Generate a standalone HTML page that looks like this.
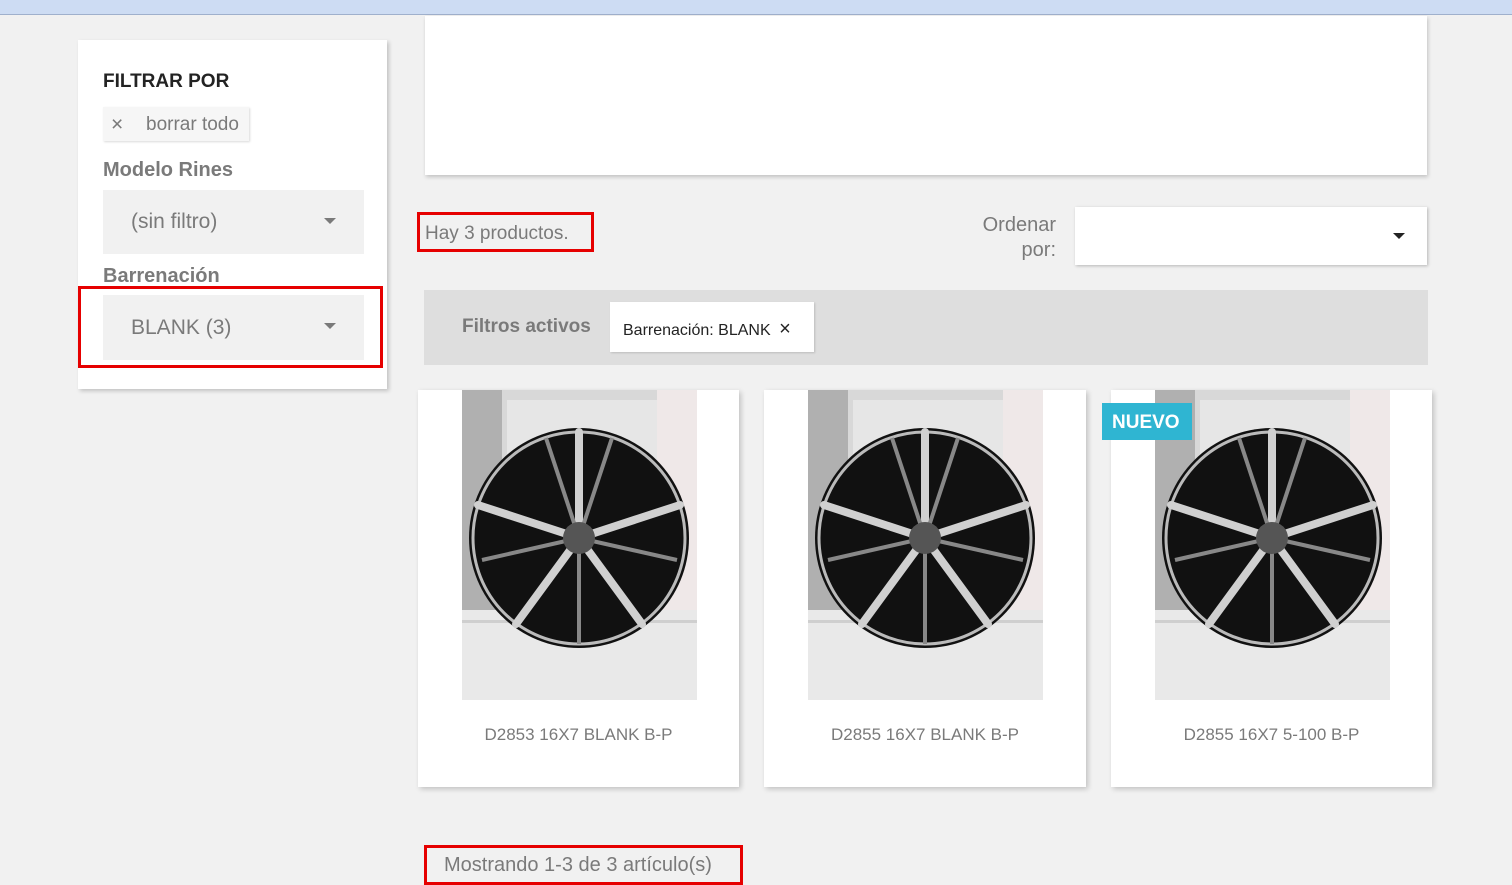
<!DOCTYPE html>
<html><head><meta charset="utf-8"><style>
*{box-sizing:border-box;margin:0;padding:0}
body{width:1512px;height:880px;overflow:hidden;background:#f1f1f1;font-family:"Liberation Sans",sans-serif;color:#7a7a7a;position:relative}
.a{position:absolute}
.sh{box-shadow:2px 2px 4px rgba(0,0,0,.2)}
.red{border:3px solid #e60000}
.dd{background:#f1f1f1;font-size:20px;color:#7a7a7a}
.tri{width:0;height:0;border-left:6px solid transparent;border-right:6px solid transparent;border-top:6px solid #7a7a7a}
.card{background:#fff;box-shadow:2px 2px 5px rgba(0,0,0,.2)}
.name{font-size:17px;color:#7a7a7a;text-align:center;width:100%}
</style></head><body>
<div class="a" style="left:0;top:0;width:1512px;height:15px;background:#cddcf3;border-bottom:1px solid #9fb0cc"></div>
<div class="a" style="left:425px;top:16px;width:1002px;height:159px;background:#fff;box-shadow:1px 2px 4px rgba(0,0,0,.2)"></div>

<div class="a sh" style="left:78px;top:40px;width:309px;height:349px;background:#fff"></div>
<div class="a" style="left:103px;top:71px;font-size:19px;font-weight:bold;color:#232323">FILTRAR POR</div>
<div class="a" style="left:103px;top:107px;width:146px;height:34px;background:#f6f6f6;box-shadow:1px 1px 2px rgba(0,0,0,.15)"></div>
<div class="a" style="left:111px;top:113px;font-size:21px;color:#7a7a7a">×</div>
<div class="a" style="left:146px;top:114px;font-size:19px;color:#7a7a7a">borrar todo</div>
<div class="a" style="left:103px;top:159px;font-size:20px;font-weight:bold;color:#7a7a7a">Modelo Rines</div>
<div class="a dd" style="left:103px;top:190px;width:261px;height:64px"></div>
<div class="a" style="left:131px;top:210px;font-size:21px">(sin filtro)</div>
<div class="a tri" style="left:324px;top:218px"></div>
<div class="a" style="left:103px;top:265px;font-size:20px;font-weight:bold;color:#7a7a7a">Barrenación</div>
<div class="a red" style="left:78px;top:286px;width:305px;height:82px"></div>
<div class="a dd" style="left:103px;top:295px;width:261px;height:65px"></div>
<div class="a" style="left:131px;top:316px;font-size:21px">BLANK (3)</div>
<div class="a tri" style="left:324px;top:323px"></div>

<div class="a red" style="left:417px;top:212px;width:177px;height:40px"></div>
<div class="a" style="left:425px;top:223px;font-size:19px">Hay 3 productos.</div>
<div class="a" style="left:960px;top:213px;width:96px;font-size:20px;text-align:right;line-height:25px">Ordenar por:</div>
<div class="a" style="left:1075px;top:207px;width:352px;height:58px;background:#fff;box-shadow:1px 1px 3px rgba(0,0,0,.25)"></div>
<div class="a" style="left:1393px;top:233px;width:0;height:0;border-left:6px solid transparent;border-right:6px solid transparent;border-top:6px solid #232323"></div>

<div class="a" style="left:424px;top:290px;width:1004px;height:75px;background:#dedede"></div>
<div class="a" style="left:462px;top:316px;font-size:19px;font-weight:bold;color:#7a7a7a">Filtros activos</div>
<div class="a" style="left:610px;top:302px;width:204px;height:50px;background:#fff;box-shadow:1px 1px 2px rgba(0,0,0,.15)"></div>
<div class="a" style="left:623px;top:318px;font-size:16px;color:#232323">Barrenación: BLANK <span style="font-size:20px;margin-left:4px">×</span></div>

<svg width="0" height="0" style="position:absolute">
<defs>
<symbol id="w" viewBox="0 0 235 310">
<rect width="235" height="310" fill="#d8d8d8"/>
<rect x="0" y="0" width="40" height="240" fill="#b0b0b0"/>
<rect x="45" y="10" width="150" height="70" fill="#e6e6e6"/>
<rect x="195" y="0" width="40" height="250" fill="#efe8e8"/>
<rect x="0" y="220" width="235" height="90" fill="#e9e9e9"/>
<rect x="0" y="230" width="235" height="3" fill="#cfcfcf"/>
<circle cx="117" cy="148" r="110" fill="#111"/>
<circle cx="117" cy="148" r="106" fill="none" stroke="#bbb" stroke-width="3"/>
<g stroke="#d0d0d0" stroke-width="8" stroke-linecap="round">
<line x1="117" y1="148" x2="117" y2="42"/><line x1="117" y1="148" x2="218" y2="115"/>
<line x1="117" y1="148" x2="180" y2="234"/><line x1="117" y1="148" x2="54" y2="234"/>
<line x1="117" y1="148" x2="16" y2="115"/>
</g>
<g stroke="#888" stroke-width="4">
<line x1="117" y1="148" x2="150" y2="48"/><line x1="117" y1="148" x2="84" y2="48"/>
<line x1="117" y1="148" x2="215" y2="170"/><line x1="117" y1="148" x2="20" y2="170"/>
<line x1="117" y1="148" x2="117" y2="254"/>
</g>
<circle cx="117" cy="148" r="16" fill="#555"/>
</symbol></defs></svg>

<div class="a card" style="left:418px;top:390px;width:321px;height:397px"></div>
<svg class="a" style="left:462px;top:390px" width="235" height="310"><use href="#w"/></svg>
<div class="a name" style="left:418px;top:725px;width:321px">D2853 16X7 BLANK B-P</div>

<div class="a card" style="left:764px;top:390px;width:322px;height:397px"></div>
<svg class="a" style="left:808px;top:390px" width="235" height="310"><use href="#w"/></svg>
<div class="a name" style="left:764px;top:725px;width:322px">D2855 16X7 BLANK B-P</div>

<div class="a card" style="left:1111px;top:390px;width:321px;height:397px"></div>
<svg class="a" style="left:1155px;top:390px" width="235" height="310"><use href="#w"/></svg>
<div class="a" style="left:1102px;top:403px;width:90px;height:37px;background:#2fb5d2;color:#fff;font-weight:bold;font-size:19px;padding:9px 0 0 10px">NUEVO</div>
<div class="a name" style="left:1111px;top:725px;width:321px">D2855 16X7 5-100 B-P</div>

<div class="a red" style="left:424px;top:845px;width:319px;height:40px"></div>
<div class="a" style="left:444px;top:854px;font-size:20px">Mostrando 1-3 de 3 artículo(s)</div>
</body></html>
